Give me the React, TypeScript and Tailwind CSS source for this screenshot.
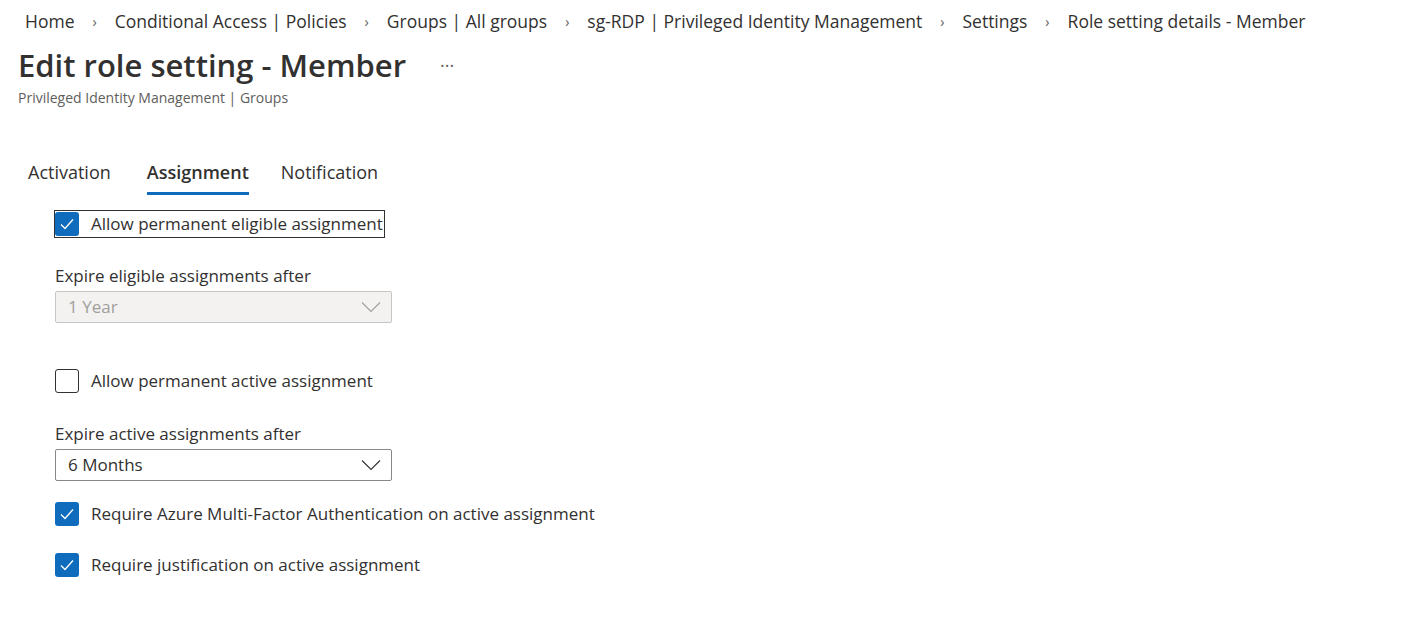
const crumbs = [
  "Home",
  "Conditional Access | Policies",
  "Groups | All groups",
  "sg-RDP | Privileged Identity Management",
  "Settings",
  "Role setting details - Member",
];

function Check({ checked }: { checked: boolean }) {
  if (!checked) {
    return (
      <span className="w-6 h-6 rounded-[3px] border border-[#323130] bg-white shrink-0" />
    );
  }
  return (
    <span className="w-6 h-6 rounded-[3px] bg-[#0f6cbd] shrink-0 flex items-center justify-center">
      <svg width="18" height="18" viewBox="0 0 18 18" fill="none">
        <path d="M3 9.5 L7 13.5 L15 4.5" stroke="white" strokeWidth="1.3" />
      </svg>
    </span>
  );
}

function Row({
  checked,
  label,
  focused,
}: {
  checked: boolean;
  label: string;
  focused?: boolean;
}) {
  return (
    <div
      className={
        "self-start inline-flex items-center gap-3 h-[26px] " +
        (focused ? "outline outline-1 outline-[#323130]" : "")
      }
    >
      <Check checked={checked} />
      <span className="pr-[1px]">{label}</span>
    </div>
  );
}

function Select({ value, disabled }: { value: string; disabled?: boolean }) {
  return (
    <div
      className={
        "w-[337px] h-8 rounded-[2px] border flex items-center justify-between pl-3 pr-[10px] " +
        (disabled
          ? "bg-[#f3f2f1] border-[#c8c6c4] text-[#a19f9d]"
          : "bg-white border-[#8a8886] text-[#323130]")
      }
    >
      <span>{value}</span>
      <svg width="20" height="12" viewBox="0 0 20 12" fill="none">
        <path
          d="M1 1.5 L10 10.5 L19 1.5"
          stroke={disabled ? "#a19f9d" : "#323130"}
          strokeWidth="1.1"
        />
      </svg>
    </div>
  );
}

export default function App() {
  return (
    <div
      className="w-[1403px] h-[624px] bg-white text-[#323130] text-[17px] overflow-hidden"
      style={{ fontFamily: '"Open Sans", "Noto Sans", sans-serif' }}
    >
      <div className="flex items-center h-[42px] pl-[25px] text-[17.5px]">
        {crumbs.map((c, i) => (
          <div key={i} className="flex items-center">
            {i > 0 && (
              <span className="text-[#605e5c] text-[14px] px-[18px]">›</span>
            )}
            <span>{c}</span>
          </div>
        ))}
      </div>

      <div className="pl-[18px]">
        <div className="flex items-center gap-[34px] h-[46px]">
          <h1 className="text-[31px] font-semibold">Edit role setting - Member</h1>
          <span className="text-[#605e5c] text-[18px]">···</span>
        </div>
        <div className="text-[14px] text-[#605e5c] -mt-[1px]">
          Privileged Identity Management | Groups
        </div>
      </div>

      <div className="flex pl-[28px] mt-[51px] text-[18px]">
        <div className="pb-2">Activation</div>
        <div className="ml-[36px] pb-[6px] font-semibold border-b-[3px] border-[#0f6cbd]">
          Assignment
        </div>
        <div className="ml-[32px] pb-2">Notification</div>
      </div>

      <div className="pl-[55px] mt-[16px] flex flex-col">
        <Row checked label="Allow permanent eligible assignment" focused />
        <div className="mt-[26px] mb-[2px]">Expire eligible assignments after</div>
        <Select value="1 Year" disabled />
        <div className="mt-[45px]">
          <Row checked={false} label="Allow permanent active assignment" />
        </div>
        <div className="mt-[22px] mb-[2px]">Expire active assignments after</div>
        <Select value="6 Months" />
        <div className="mt-[20px]">
          <Row checked label="Require Azure Multi-Factor Authentication on active assignment" />
        </div>
        <div className="mt-[23px]">
          <Row checked label="Require justification on active assignment" />
        </div>
      </div>
    </div>
  );
}
